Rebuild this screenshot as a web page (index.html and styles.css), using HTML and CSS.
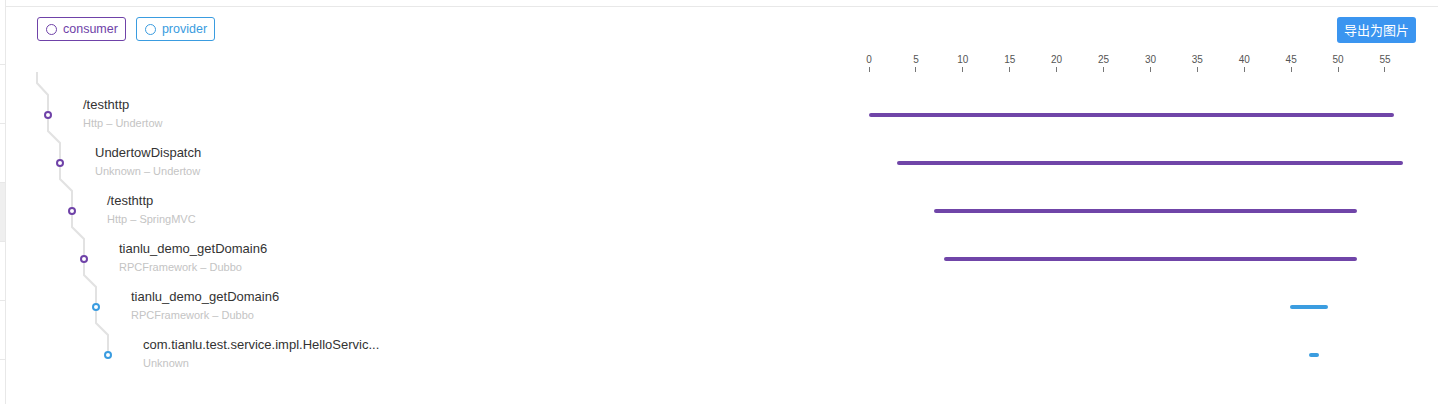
FILE: index.html
```html
<!DOCTYPE html>
<html lang="zh">
<head>
<meta charset="utf-8">
<title>Trace</title>
<link rel="stylesheet" href="styles.css">
</head>
<body>
<div class="app">
  <aside class="sidebar">
    <div class="side-row"></div>
    <div class="side-row"></div>
    <div class="side-row"></div>
    <div class="side-row active"></div>
    <div class="side-row"></div>
    <div class="side-row"></div>
    <div class="side-row"></div>
  </aside>
  <main class="main">
    <div class="toolbar">
      <div class="legend">
        <span class="tag tag-consumer"><span class="ring"></span>consumer</span>
        <span class="tag tag-provider"><span class="ring"></span>provider</span>
      </div>
      <button class="export-btn">导出为图片</button>
    </div>
    <div class="chart">
      <svg class="tree-lines" width="200" height="330" viewBox="0 0 200 330">
        <path d="M31 29 V40 L42 52 V88 L54 100 V136 L66 148 V184 L78 196 V232 L90 244 V280 L102 292 V312" fill="none" stroke="#e2e2e2" stroke-width="2"/>
        <circle cx="42" cy="72" r="3" fill="#fff" stroke="#6f42a8" stroke-width="2"/>
        <circle cx="54" cy="120" r="3" fill="#fff" stroke="#6f42a8" stroke-width="2"/>
        <circle cx="66" cy="168" r="3" fill="#fff" stroke="#6f42a8" stroke-width="2"/>
        <circle cx="78" cy="216" r="3" fill="#fff" stroke="#6f42a8" stroke-width="2"/>
        <circle cx="90" cy="264" r="3" fill="#fff" stroke="#3a9ce0" stroke-width="2"/>
        <circle cx="102" cy="312" r="3" fill="#fff" stroke="#3a9ce0" stroke-width="2"/>
      </svg>
      <div class="axis-row">
        <div></div>
        <div class="axis">
          <div class="tick"><span>0</span><i></i></div>
          <div class="tick"><span>5</span><i></i></div>
          <div class="tick"><span>10</span><i></i></div>
          <div class="tick"><span>15</span><i></i></div>
          <div class="tick"><span>20</span><i></i></div>
          <div class="tick"><span>25</span><i></i></div>
          <div class="tick"><span>30</span><i></i></div>
          <div class="tick"><span>35</span><i></i></div>
          <div class="tick"><span>40</span><i></i></div>
          <div class="tick"><span>45</span><i></i></div>
          <div class="tick"><span>50</span><i></i></div>
          <div class="tick"><span>55</span><i></i></div>
        </div>
      </div>
      <div class="rows">
        <div class="row">
          <div class="node lv0"><div class="title">/testhttp</div><div class="sub">Http – Undertow</div></div>
          <div class="track"><div class="bar consumer" style="margin-left:0px;width:525px"></div></div>
        </div>
        <div class="row">
          <div class="node lv1"><div class="title">UndertowDispatch</div><div class="sub">Unknown – Undertow</div></div>
          <div class="track"><div class="bar consumer" style="margin-left:28px;width:506px"></div></div>
        </div>
        <div class="row">
          <div class="node lv2"><div class="title">/testhttp</div><div class="sub">Http – SpringMVC</div></div>
          <div class="track"><div class="bar consumer" style="margin-left:65px;width:423px"></div></div>
        </div>
        <div class="row">
          <div class="node lv3"><div class="title">tianlu_demo_getDomain6</div><div class="sub">RPCFramework – Dubbo</div></div>
          <div class="track"><div class="bar consumer" style="margin-left:75px;width:413px"></div></div>
        </div>
        <div class="row">
          <div class="node lv4"><div class="title">tianlu_demo_getDomain6</div><div class="sub">RPCFramework – Dubbo</div></div>
          <div class="track"><div class="bar provider" style="margin-left:421px;width:38px"></div></div>
        </div>
        <div class="row">
          <div class="node lv5"><div class="title">com.tianlu.test.service.impl.HelloServic...</div><div class="sub">Unknown</div></div>
          <div class="track"><div class="bar provider" style="margin-left:440px;width:10px"></div></div>
        </div>
      </div>
    </div>
  </main>
</div>
</body>
</html>
```

FILE: styles.css
```css
* { box-sizing: border-box; }
html, body {
  margin: 0;
  padding: 0;
  background: #fff;
  font-family: "Liberation Sans", "Noto Sans CJK SC", Arial, sans-serif;
  color: #333;
}
.app {
  display: flex;
  height: 404px;
  overflow: hidden;
}
.sidebar {
  width: 6px;
  flex: 0 0 6px;
  border-right: 1px solid #e8e8e8;
  padding-top: 6px;
}
.side-row {
  height: 59px;
  border-bottom: 1px solid #e8e8e8;
}
.side-row.active {
  background: #efefef;
}
.main {
  flex: 1;
  margin-top: 6px;
  border-top: 1px solid #e8e8e8;
}
.toolbar {
  display: flex;
  justify-content: space-between;
  align-items: flex-start;
  height: 36px;
  padding: 10px 22px 0 31px;
}
.legend {
  display: flex;
  gap: 10px;
}
.tag {
  display: inline-flex;
  align-items: center;
  height: 24px;
  padding: 0 7px 0 8px;
  border: 1px solid;
  border-radius: 3px;
  font-size: 12.5px;
  gap: 6px;
}
.ring {
  width: 11px;
  height: 11px;
  border-radius: 50%;
  border: 1.7px solid currentColor;
}
.tag-consumer { color: #6f42a8; border-color: #6f42a8; }
.tag-provider { color: #3a9ce0; border-color: #3a9ce0; }
.export-btn {
  height: 26px;
  padding: 0 7px;
  border: none;
  border-radius: 3px;
  background: #3b95f0;
  color: #fff;
  font-family: "Noto Sans CJK SC", sans-serif;
  font-size: 13px;
  line-height: 26px;
}
.chart {
  position: relative;
}
.tree-lines {
  position: absolute;
  left: 0;
  top: 0;
}
.axis-row {
  display: grid;
  grid-template-columns: 863px 1fr;
  padding-top: 10px;
}
.axis {
  display: flex;
  gap: 46.91px;
}
.tick {
  width: 0;
  display: flex;
  flex-direction: column;
  align-items: center;
}
.tick span {
  font-size: 10px;
  line-height: 14px;
  color: #555;
  white-space: nowrap;
}
.tick i {
  display: block;
  width: 1px;
  height: 5px;
  background: #777;
}
.rows {
  margin-top: 19px;
}
.row {
  display: grid;
  grid-template-columns: 863px 1fr;
  height: 48px;
}
.node {
  padding-top: 4px;
  white-space: nowrap;
}
.lv0 { padding-left: 77px; }
.lv1 { padding-left: 89px; }
.lv2 { padding-left: 101px; }
.lv3 { padding-left: 113px; }
.lv4 { padding-left: 125px; }
.lv5 { padding-left: 137px; }
.title {
  font-size: 13px;
  line-height: 19px;
  color: #333;
}
.sub {
  font-size: 11px;
  line-height: 18px;
  color: #c4c4c4;
}
.track {
  display: flex;
  align-items: center;
}
.bar {
  height: 4px;
  border-radius: 2px;
}
.bar.consumer { background: #7045a8; }
.bar.provider { background: #3b9de0; }
```
